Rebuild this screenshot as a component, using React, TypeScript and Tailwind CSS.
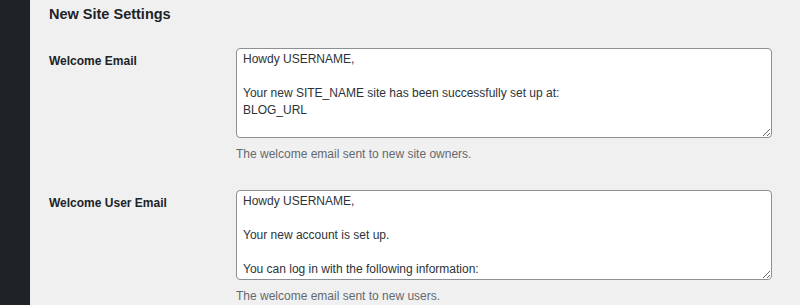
const welcomeEmail = `Howdy USERNAME,

Your new SITE_NAME site has been successfully set up at:
BLOG_URL

You can log in to the administrator account with the following information:

Username: USERNAME
Password: PASSWORD
Log in here: BLOG_URLwp-login.php

We hope you enjoy your new site. Thanks!

--The Team @ SITE_NAME`;

const welcomeUserEmail = `Howdy USERNAME,

Your new account is set up.

You can log in with the following information:
Username: USERNAME
Password: PASSWORD
LOGINLINK

Thanks!

--The Team @ SITE_NAME`;

const rows = [
  { label: "Welcome Email", value: welcomeEmail, help: "The welcome email sent to new site owners." },
  { label: "Welcome User Email", value: welcomeUserEmail, help: "The welcome email sent to new users." },
];

export default function App() {
  return (
    <div className="flex h-[305px] w-[800px] overflow-hidden bg-[#f0f0f1] font-['Liberation_Sans',Arial,sans-serif]">
      {/* admin menu strip */}
      <div className="w-[30px] shrink-0 bg-[#1d2327]" />

      <div className="flex-1 pl-[19px]">
        <h2 className="pt-[3.5px] text-[14.5px] leading-[20px] font-bold text-[#1d2327]">
          New Site Settings
        </h2>

        <div className="mt-[24.5px] flex flex-col gap-[27px]">
          {rows.map((row) => (
            <div key={row.label} className="grid grid-cols-[187px_536px]">
              <div className="pt-[4.5px] text-[12px] leading-[17px] font-bold text-[#1d2327]">
                {row.label}
              </div>
              <div>
                <textarea
                  readOnly
                  defaultValue={row.value}
                  className="block h-[90px] w-[536px] resize-y overflow-hidden rounded-[4px] border border-[#8c8f94] bg-white px-[6px] py-[2px] text-[12px] leading-[17px] text-[#2c3338] outline-none"
                />
                <p className="mt-2 text-[12px] leading-[17px] text-[#646970]">{row.help}</p>
              </div>
            </div>
          ))}
        </div>
      </div>
    </div>
  );
}
